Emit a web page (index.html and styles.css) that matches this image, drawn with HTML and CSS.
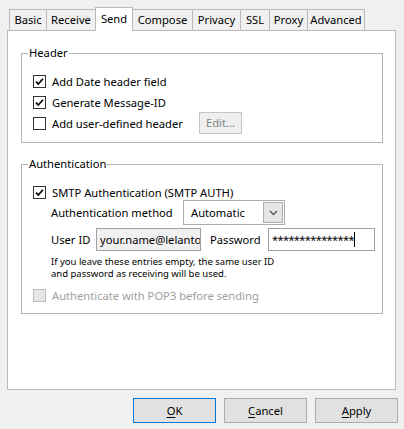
FILE: index.html
```html
<!DOCTYPE html>
<html>
<head>
<meta charset="utf-8">
<link rel="stylesheet" href="styles.css">
</head>
<body>
<div class="window">
  <div class="tabs">
    <div class="tab t1">Basic</div>
    <div class="tab t2">Receive</div>
    <div class="tab t3 active">Send</div>
    <div class="tab t4">Compose</div>
    <div class="tab t5">Privacy</div>
    <div class="tab t6">SSL</div>
    <div class="tab t7">Proxy</div>
    <div class="tab t8">Advanced</div>
  </div>
  <div class="panel">
    <div class="group g-header">
      <span class="legend">Header</span>
      <div class="row r1">
        <span class="cb"><svg viewBox="0 0 11 11" width="11" height="11"><path d="M2 5.6 L4.3 8 L9 2.8" fill="none" stroke="#000" stroke-width="1.7"/></svg></span>
        <span class="lbl">Add Date header field</span>
      </div>
      <div class="row r2">
        <span class="cb"><svg viewBox="0 0 11 11" width="11" height="11"><path d="M2 5.6 L4.3 8 L9 2.8" fill="none" stroke="#000" stroke-width="1.7"/></svg></span>
        <span class="lbl">Generate Message-ID</span>
      </div>
      <div class="row r3">
        <span class="cb"></span>
        <span class="lbl fixed">Add user-defined header</span>
        <span class="btn-edit">Edit...</span>
      </div>
    </div>
    <div class="group g-auth">
      <span class="legend">Authentication</span>
      <div class="row a1">
        <span class="cb"><svg viewBox="0 0 11 11" width="11" height="11"><path d="M2 5.6 L4.3 8 L9 2.8" fill="none" stroke="#000" stroke-width="1.7"/></svg></span>
        <span class="lbl">SMTP Authentication (SMTP AUTH)</span>
      </div>
      <div class="sub a2">
        <span class="sublbl w-method">Authentication method</span>
        <div class="select">
          <span class="sel-text">Automatic</span>
          <span class="sel-btn"><svg viewBox="0 0 9 6" width="9" height="6"><path d="M1 1 L4.5 4.5 L8 1" fill="none" stroke="#555" stroke-width="1.4"/></svg></span>
        </div>
      </div>
      <div class="sub a3">
        <span class="sublbl w-user">User ID</span>
        <div class="input input-user"><span class="in-text clip">your.name@lelantos.org</span></div>
        <span class="sublbl w-pass">Password</span>
        <div class="input input-pass"><span class="in-text stars">***************</span><span class="caret"></span></div>
      </div>
      <div class="note">If you leave these entries empty, the same user ID<br>and password as receiving will be used.</div>
      <div class="row a4">
        <span class="cb disabled"></span>
        <span class="lbl dis">Authenticate with POP3 before sending</span>
      </div>
    </div>
  </div>
  <div class="buttons">
    <div class="btn default"><u>O</u>K</div>
    <div class="btn"><u>C</u>ancel</div>
    <div class="btn"><u>A</u>pply</div>
  </div>
</div>
</body>
</html>
```
FILE: styles.css
```css
html, body {
  margin: 0;
  padding: 0;
}
body {
  background: #f0f0f0;
  font-family: "Noto Sans", "Open Sans", sans-serif;
  font-size: 11.2px;
  color: #000;
  width: 404px;
  height: 429px;
  overflow: hidden;
}
.window {
  display: flex;
  flex-direction: column;
}
.tabs {
  display: flex;
  margin-top: 9px;
  padding-left: 9px;
  height: 21px;
  position: relative;
  z-index: 2;
}
.tab {
  box-sizing: border-box;
  height: 21px;
  border: 1px solid #b9b9b9;
  border-bottom: none;
  border-right: none;
  background: #f0f0f0;
  line-height: 20px;
  text-align: center;
  white-space: nowrap;
  overflow: hidden;
}
.tab.t8 { border-right: 1px solid #b9b9b9; }
.t1 { width: 37px; }
.t2 { width: 49px; }
.t3 { width: 38px; }
.t4 { width: 60px; }
.t5 { width: 48px; }
.t6 { width: 29px; }
.t7 { width: 38px; }
.t8 { width: 58px; }
.tab.active {
  background: #fff;
  height: 24px;
  margin-top: -2px;
  border-right: 1px solid #b9b9b9;
  margin-right: -1px;
  line-height: 21px;
  position: relative;
  z-index: 3;
}
.panel {
  box-sizing: border-box;
  margin-left: 7px;
  width: 389px;
  height: 360px;
  background: #fff;
  border: 1px solid #b9b9b9;
  padding: 22px 12px 0 13px;
  position: relative;
  z-index: 1;
}
.group {
  position: relative;
  box-sizing: border-box;
  width: 362px;
  border: 1px solid #b4b4b4;
}
.g-header {
  padding: 16px 0 8px 11px;
}
.g-auth {
  margin-top: 21px;
  padding: 20px 0 6px 11px;
}
.legend {
  position: absolute;
  top: -9px;
  left: 6px;
  background: #fff;
  padding: 0 1px;
  line-height: 16px;
}
.row {
  display: flex;
  align-items: center;
}
.r1 { height: 22px; }
.r2 { height: 20px; }
.r3 { height: 22px; }
.a1 { height: 15px; }
.a4 { height: 23px; margin-top: 4px; }
.cb {
  box-sizing: border-box;
  width: 13px;
  height: 13px;
  border: 1px solid #333;
  background: #fff;
  display: flex;
  align-items: center;
  justify-content: center;
  flex: none;
}
.cb.disabled {
  border-color: #bcbcbc;
  background: #e6e6e6;
}
.lbl {
  margin-left: 6px;
  white-space: nowrap;
}
.lbl.fixed {
  width: 147px;
  flex: none;
}
.lbl.dis { color: #a0a0a0; }
.btn-edit {
  box-sizing: border-box;
  width: 43px;
  height: 22px;
  border: 1px solid #c4c4c4;
  background: #efefef;
  color: #838383;
  text-align: center;
  line-height: 20px;
}
.sub {
  display: flex;
  align-items: center;
  padding-left: 18px;
}
.a2 { height: 25px; }
.a3 { height: 23px; margin-top: 3px; }
.sublbl { white-space: nowrap; flex: none; }
.w-method { width: 132px; }
.w-user { width: 45px; }
.w-pass { width: 58px; margin-left: 9px; }
.select {
  box-sizing: border-box;
  width: 102px;
  height: 25px;
  border: 1px solid #adadad;
  background: #fff;
  display: flex;
  align-items: center;
  padding: 1px;
}
.sel-text {
  flex: 1;
  padding-left: 6px;
}
.sel-btn {
  box-sizing: border-box;
  width: 20px;
  height: 21px;
  border: 1px solid #adadad;
  background: #e5e5e5;
  display: flex;
  align-items: center;
  justify-content: center;
}
.input {
  box-sizing: border-box;
  height: 23px;
  border: 1px solid #a0a0a0;
  display: flex;
  align-items: center;
  overflow: hidden;
  flex: none;
}
.input-user {
  width: 105px;
  background: #f0f0f0;
}
.input-pass {
  width: 107px;
  background: #fff;
}
.in-text {
  padding-left: 3px;
  white-space: nowrap;
}
.in-text.clip {
  display: block;
  box-sizing: border-box;
  width: 103px;
  overflow: hidden;
}
.stars {
  font-size: 11px;
  letter-spacing: -0.6px;
}
.caret {
  width: 1px;
  height: 15px;
  background: #000;
  flex: none;
}
.note {
  margin-top: 5px;
  padding-left: 18px;
  font-size: 9.5px;
  line-height: 12px;
  height: 24px;
  white-space: nowrap;
}
.buttons {
  display: flex;
  justify-content: flex-end;
  gap: 8px;
  margin-top: 8px;
  padding-right: 6px;
}
.btn {
  box-sizing: border-box;
  width: 83px;
  height: 25px;
  border: 1px solid #adadad;
  background: #e1e1e1;
  text-align: center;
  line-height: 23px;
}
.btn.default {
  border: 1px solid #0078d7;
}
.btn u {
  text-decoration-thickness: 1px;
  text-underline-offset: 2px;
}
```
